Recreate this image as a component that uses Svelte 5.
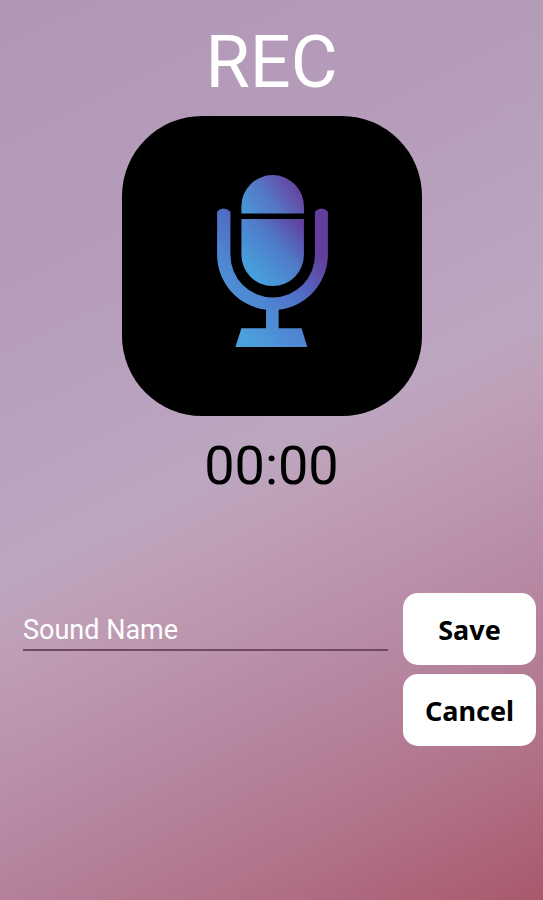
<script>
  let name = $state('')
  let seconds = $state(0)
  let timer = null

  const pad = (n) => String(n).padStart(2, '0')
  const time = $derived(`${pad(Math.floor(seconds / 60))}:${pad(seconds % 60)}`)

  const stop = () => {
    clearInterval(timer)
    timer = null
  }

  const toggleRecording = () => {
    if (timer) return stop()
    timer = setInterval(() => { seconds += 1 }, 1000)
  }

  const save = (e) => {
    e.preventDefault()
    stop()
  }

  const cancel = () => {
    stop()
    seconds = 0
    name = ''
  }
</script>

<main class="recorder">
  <h1>REC</h1>

  <button class="mic-button" type="button" aria-label="Record" onclick={toggleRecording}>
    <svg class="mic" viewBox="51 44 333 517" aria-hidden="true">
      <defs>
        <linearGradient id="head" gradientUnits="userSpaceOnUse" x1="135" y1="170" x2="285" y2="65">
          <stop offset="0" stop-color="#4799d8" />
          <stop offset="0.5" stop-color="#5676c4" />
          <stop offset="1" stop-color="#65429f" />
        </linearGradient>
        <linearGradient id="body" gradientUnits="userSpaceOnUse" x1="155" y1="330" x2="310" y2="190">
          <stop offset="0" stop-color="#479edb" />
          <stop offset="0.5" stop-color="#4f7cc9" />
          <stop offset="1" stop-color="#60409d" />
        </linearGradient>
        <linearGradient id="stand" gradientUnits="userSpaceOnUse" x1="160" y1="560" x2="400" y2="330">
          <stop offset="0" stop-color="#4c9fdd" />
          <stop offset="0.4" stop-color="#4f82d0" />
          <stop offset="0.66" stop-color="#506bc5" />
          <stop offset="1" stop-color="#623f9c" />
        </linearGradient>
      </defs>
      <path fill="url(#head)" d="M124 160V138a94 94 0 0 1 188 0v22z" />
      <path fill="url(#body)" d="M124 176h188v108a94 94 0 0 1-188 0z" />
      <path
        fill="url(#stand)"
        d="M51 154q18-18 40 0V285a127 127 0 0 0 254 0V154q20-18 39 0V285a167 167 0 0 1-148 164v56h69l17 56H106l18-56h74v-56A167 167 0 0 1 51 285z"
      />
    </svg>
  </button>

  <p class="time">{time}</p>

  <form class="save-form" onsubmit={save}>
    <input type="text" placeholder="Sound Name" aria-label="Sound Name" bind:value={name} />
    <div class="actions">
      <button class="action" type="submit">Save</button>
      <button class="action" type="button" onclick={cancel}>Cancel</button>
    </div>
  </form>
</main>

<style>
  :global(body) {
    margin: 0;
  }

  .recorder {
    display: flex;
    flex-direction: column;
    align-items: center;
    box-sizing: border-box;
    min-height: 100vh;
    padding: 21px 0;
    font-family: Roboto, sans-serif;
    background: linear-gradient(
      154deg,
      #b097b6 0%,
      #b59dba 25%,
      #bca6c0 50%,
      #bf9fb6 56%,
      #b788a4 72%,
      #b1758c 85%,
      #aa586c 100%
    );
  }

  h1 {
    margin: 0;
    font-size: 72px;
    font-weight: 400;
    line-height: 84px;
    color: #fff;
  }

  .mic-button {
    display: flex;
    align-items: center;
    justify-content: center;
    width: 300px;
    height: 300px;
    margin-top: 11px;
    padding: 0 0 10px 2px;
    border: 0;
    border-radius: 80px;
    background: #000;
    cursor: pointer;
  }

  .mic {
    width: 111px;
    height: 172px;
  }

  .time {
    margin: 18px 0 0;
    font-size: 54px;
    line-height: 64px;
    color: #000;
  }

  .save-form {
    display: flex;
    align-items: flex-start;
    gap: 15px;
    box-sizing: border-box;
    width: 100%;
    margin-top: 95px;
    padding: 0 7px 0 23px;
  }

  input {
    flex: 1;
    min-width: 0;
    box-sizing: border-box;
    height: 58px;
    padding: 18px 0 0;
    border: 0;
    border-bottom: 2px solid #704a62;
    border-radius: 0;
    outline: 0;
    background: transparent;
    font-family: inherit;
    font-size: 27px;
    color: #fff;
  }

  input::placeholder {
    color: #fff;
    opacity: 1;
  }

  .actions {
    display: flex;
    flex-direction: column;
    gap: 9px;
    width: 133px;
  }

  .action {
    height: 72px;
    padding: 0;
    border: 0;
    border-radius: 15px;
    background: #fff;
    font-family: "Noto Sans", sans-serif;
    font-size: 27px;
    font-weight: 700;
    color: #000;
    cursor: pointer;
  }
</style>
